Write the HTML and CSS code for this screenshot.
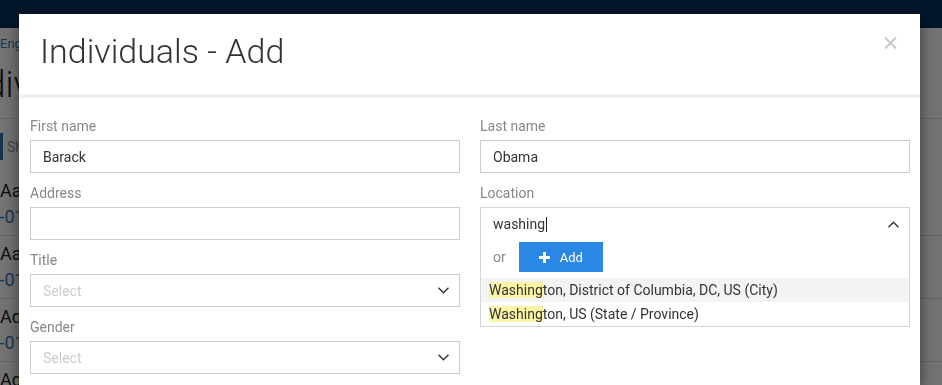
FILE: index.html
```html
<!DOCTYPE html>
<html lang="en">
<head>
    <meta charset="UTF-8">
    <meta name="viewport" content="width=device-width, initial-scale=1.0">
    <title>Individuals - Add</title>
    <link rel="stylesheet" href="styles.css">
</head>
<body>
    <div class="topbar"></div>
    <div class="page">
        <a class="lang" href="#">English</a>
        <h1 class="page-title">Individuals</h1>
        <div class="toolbar"><span class="toolbar-btn"></span><span class="toolbar-search">Show all</span></div>
        <ul class="people">
            <li><div class="person-name">Aaron Abrams</div><div class="person-date">1974-01-15</div></li>
            <li><div class="person-name">Aaron Bell</div><div class="person-date">1968-01-22</div></li>
            <li><div class="person-name">Adam Clark</div><div class="person-date">1981-01-03</div></li>
            <li><div class="person-name">Adams John</div><div class="person-date">1955-01-09</div></li>
        </ul>
    </div>

    <div class="overlay">
        <div class="modal">
            <div class="modal-header">
                <h2 class="modal-title">Individuals - Add</h2>
                <button class="close" aria-label="Close">
                    <svg width="13" height="14" viewBox="0 0 13 14"><path d="M1 1.5 L12 12.5 M12 1.5 L1 12.5" stroke="#c8c8c8" stroke-width="2" fill="none"/></svg>
                </button>
            </div>
            <div class="modal-body">
                <div class="col">
                    <div class="field">
                        <label>First name</label>
                        <div class="input">Barack</div>
                    </div>
                    <div class="field">
                        <label>Address</label>
                        <div class="input"></div>
                    </div>
                    <div class="field">
                        <label>Title</label>
                        <div class="input select"><span class="placeholder">Select</span>
                            <svg width="11" height="7" viewBox="0 0 11 7"><path d="M0.5 0.8 L5.5 5.8 L10.5 0.8" stroke="#333" stroke-width="1.4" fill="none"/></svg>
                        </div>
                    </div>
                    <div class="field">
                        <label>Gender</label>
                        <div class="input select"><span class="placeholder">Select</span>
                            <svg width="11" height="7" viewBox="0 0 11 7"><path d="M0.5 0.8 L5.5 5.8 L10.5 0.8" stroke="#333" stroke-width="1.4" fill="none"/></svg>
                        </div>
                    </div>
                </div>
                <div class="col">
                    <div class="field">
                        <label>Last name</label>
                        <div class="input">Obama</div>
                    </div>
                    <div class="field">
                        <label>Location</label>
                        <div class="combo">
                            <div class="combo-input">
                                <span>washing<span class="caret"></span></span>
                                <svg width="11" height="7" viewBox="0 0 11 7"><path d="M0.5 6.2 L5.5 1.2 L10.5 6.2" stroke="#333" stroke-width="1.4" fill="none"/></svg>
                            </div>
                            <div class="combo-add">
                                <span class="or">or</span>
                                <button class="btn-add">
                                    <svg width="11" height="11" viewBox="0 0 11 11"><path d="M5.5 0 V11 M0 5.5 H11" stroke="#fff" stroke-width="3"/></svg>
                                    <span>Add</span>
                                </button>
                            </div>
                            <ul class="combo-options">
                                <li class="active"><mark>Washing</mark>ton, District of Columbia, DC, US (City)</li>
                                <li><mark>Washing</mark>ton, US (State / Province)</li>
                            </ul>
                        </div>
                    </div>
                </div>
            </div>
        </div>
    </div>
</body>
</html>
```

FILE: styles.css
```css
body {margin: 0; font-family: Roboto, "Liberation Sans", sans-serif; background: #ffffff; color: #222; overflow: hidden;}

/* page behind the dialog */
.topbar {height: 28px; background: #08305e;}
.lang {display: block; margin-top: 8px; font-size: 13px; line-height: 16px; color: #337ab7; text-decoration: none;}
.page-title {margin: 13px 0 0 -44px; padding-bottom: 13px; font-size: 36px; font-weight: 300; line-height: 40px; color: #222; border-bottom: 1px solid #dddddd;}
.toolbar {display: flex; align-items: center; gap: 4px; height: 27px; margin-top: 14px;}
.toolbar-btn {width: 3px; height: 100%; background: #2f6fb0;}
.toolbar-search {font-size: 14px; color: #999;}
.people {list-style: none; margin: 13px 0 0; padding: 0;}
.people li {padding: 6px 0; border-bottom: 1px solid #dddddd;}
.person-name {font-size: 18px; line-height: 24px; color: #222;}
.person-date {margin: 2px 0 0 -41px; font-size: 18px; line-height: 24px; color: #337ab7;}

/* dialog */
.overlay {position: fixed; top: 0; left: 0; right: 0; bottom: 0; background: rgba(0, 0, 0, 0.55);}
.modal {width: 901px; height: 371px; margin: 14px 0 0 19px; background: #ffffff; box-shadow: 0 5px 15px rgba(0, 0, 0, 0.5); overflow: hidden;}
.modal-header {display: flex; justify-content: space-between; align-items: flex-start; padding: 17px 23px 23px 21px; border-bottom: 4px solid #f2f2f2;}
.modal-title {margin: 0; font-size: 34px; font-weight: 300; line-height: 40px; color: #333;}
.close {margin-top: 5px; padding: 0; border: 0; background: none; line-height: 0; cursor: pointer;}

.modal-body {display: grid; grid-template-columns: 430px 430px; column-gap: 20px; padding: 18px 10px 0 11px;}
.field {margin-bottom: 10px;}
.field label {display: block; margin-bottom: 4px; font-size: 14px; line-height: 20px; color: #888;}
.input {display: flex; align-items: center; justify-content: space-between; box-sizing: border-box; height: 33px; padding: 0 10px 0 12px; border: 1px solid #cccccc; font-size: 14px; color: #333;}
.placeholder {color: #cccccc;}

/* location autocomplete */
.combo {border: 1px solid #d6d6d6;}
.combo-input {display: flex; align-items: center; justify-content: space-between; height: 32px; padding: 0 10px 0 12px; font-size: 14px; color: #333;}
.caret {display: inline-block; width: 1px; height: 15px; margin-left: 1px; background: #222; vertical-align: -3px;}
.combo-add {display: flex; align-items: center; gap: 13px; padding: 2px 0 6px 12px;}
.or {font-size: 14px; color: #888;}
.btn-add {display: flex; align-items: center; justify-content: center; gap: 10px; width: 84px; height: 30px; border: 0; background: #2a87e4; color: #ffffff; font-family: Roboto, "Liberation Sans", sans-serif; font-size: 13px; cursor: pointer;}
.combo-options {list-style: none; margin: 0; padding: 0;}
.combo-options li {height: 24px; padding-left: 8px; font-size: 14px; line-height: 24px; color: #333;}
.combo-options li.active {background: #f3f3f3;}
mark {background: #fbf3a5; color: inherit;}
```
